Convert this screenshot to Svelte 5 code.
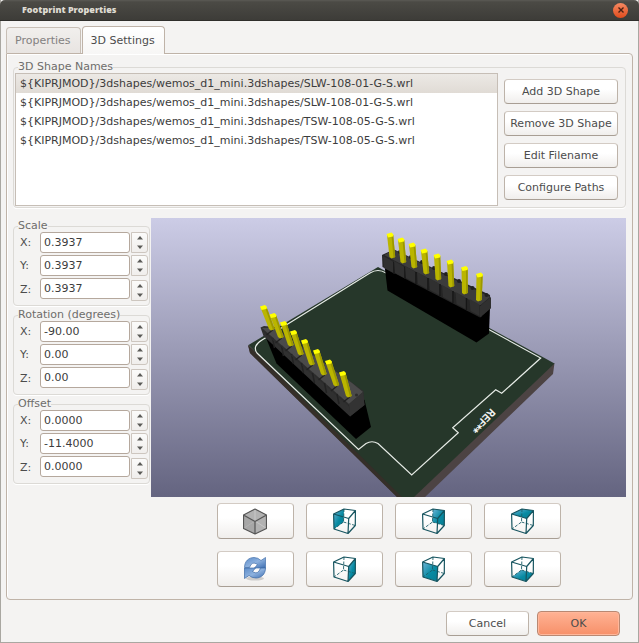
<script>
  let tab = $state('3D Settings');
  let selected = $state(0);
  let shapes = $state([
    '${KIPRJMOD}/3dshapes/wemos_d1_mini.3dshapes/SLW-108-01-G-S.wrl',
    '${KIPRJMOD}/3dshapes/wemos_d1_mini.3dshapes/SLW-108-01-G-S.wrl',
    '${KIPRJMOD}/3dshapes/wemos_d1_mini.3dshapes/TSW-108-05-G-S.wrl',
    '${KIPRJMOD}/3dshapes/wemos_d1_mini.3dshapes/TSW-108-05-G-S.wrl'
  ]);
  let groups = $state([
    { name: 'Scale', digits: 4, step: 0.1, rows: [['X', '0.3937'], ['Y', '0.3937'], ['Z', '0.3937']] },
    { name: 'Rotation (degrees)', digits: 2, step: 5, rows: [['X', '-90.00'], ['Y', '0.00'], ['Z', '0.00']] },
    { name: 'Offset', digits: 4, step: 0.1, rows: [['X', '0.0000'], ['Y', '-11.4000'], ['Z', '0.0000']] }
  ]);
  const spin = (g, row, dir) => {
    row[1] = (Number(row[1]) + dir * g.step).toFixed(g.digits);
  };

  const actions = ['Add 3D Shape', 'Remove 3D Shape', 'Edit Filename', 'Configure Paths'];
  const views = [
    { id: 'iso', label: 'Isometric view' },
    { id: 'left', label: 'Left view', face: '0.5,6 11,1 10.5,14 1,21' },
    { id: 'back', label: 'Back view', face: '11,1 22.5,2.5 22.3,17.5 10.5,14' },
    { id: 'top', label: 'Top view', face: '0.5,6 11,1 22.5,2.5 15.7,10.5' },
    { id: 'reload', label: 'Reload' },
    { id: 'right', label: 'Right view', face: '15.7,10.5 22.5,2.5 22.3,17.5 15,25.3' },
    { id: 'front', label: 'Front view', face: '0.5,6 15.7,10.5 15,25.3 1,21' },
    { id: 'bottom', label: 'Bottom view', face: '1,21 10.5,14 22.3,17.5 15,25.3' }
  ];

  // pin tip x, y and base x, y
  const farPins = [
    [390, 235, 392, 257], [401, 240, 403, 262], [412, 245, 414, 267], [424, 251, 426, 273],
    [437, 256, 438, 279], [450, 262, 451, 286], [464.5, 268.5, 464.5, 293], [479.5, 275, 478.5, 300]
  ];
  const nearPins = [
    [263.5, 307.5, 271.5, 329], [273, 315.5, 280.5, 337], [283.5, 323.5, 290.5, 345], [293.5, 332.5, 300.5, 354],
    [304.5, 341.5, 311.5, 364], [316.5, 351.5, 323.5, 374], [328.5, 362, 336, 385], [342.5, 373.5, 348.5, 396]
  ];
</script>

{#snippet pin([x, y, bx, by])}
  <polygon points="{x - 3},{y} {x + 3.2},{y} {bx + 3.2},{by} {bx - 0.5},{by + 1.5} {bx - 2.5},{by}" fill="#bab500" />
  <polygon points="{x + 1.5},{y} {x + 3.2},{y} {bx + 3.2},{by} {bx + 1.5},{by + 1}" fill="#9c9800" />
  <polygon points="{x - 3.5},{y - 1} {x + 1.5},{y - 2.5} {x + 3.5},{y - 0.5} {x + 3},{y + 1.5} {x - 2},{y + 2.5}" fill="#ff0" />
{/snippet}

<div class="window">
  <header>
    <h1>Footprint Properties</h1>
    <button class="close" aria-label="Close">
      <svg viewBox="0 0 8 8" width="8" height="8"><path d="M1.500 1.500 6.500 6.500M6.500 1.500 1.500 6.500" stroke="#4a2013" stroke-width="1.400" /></svg>
    </button>
  </header>

  <div class="tabs" role="tablist">
    {#each ['Properties', '3D Settings'] as t}
      <button role="tab" aria-selected={tab === t} class:active={tab === t} onclick={() => (tab = t)}>{t}</button>
    {/each}
  </div>

  <main>
    <fieldset class="shapes">
      <legend>3D Shape Names</legend>
      <div class="shape-row">
        <ul role="listbox" aria-label="3D Shape Names">
          {#each shapes as s, i}
            <li role="option" aria-selected={selected === i}>
              <button class:selected={selected === i} onclick={() => (selected = i)}>{s}</button>
            </li>
          {/each}
        </ul>
        <div class="actions">
          {#each actions as a}<button class="btn">{a}</button>{/each}
        </div>
      </div>
    </fieldset>

    <div class="lower">
      <div class="params">
        {#each groups as g, gi}
          <fieldset>
            <legend>{g.name}</legend>
            {#each g.rows as row, ri}
              <div class="param">
                <label for="p{gi}{ri}">{row[0]}:</label>
                <input id="p{gi}{ri}" type="text" inputmode="decimal" bind:value={row[1]} />
                <div class="spin">
                  <button aria-label="Increase {g.name} {row[0]}" onclick={() => spin(g, row, 1)}>
                    <svg viewBox="0 0 6 4" width="6" height="4"><path d="M0 3.500 3 0 6 3.500z" fill="#5a5a57" /></svg>
                  </button>
                  <button aria-label="Decrease {g.name} {row[0]}" onclick={() => spin(g, row, -1)}>
                    <svg viewBox="0 0 6 4" width="6" height="4"><path d="M0 .5 3 4 6 .5z" fill="#5a5a57" /></svg>
                  </button>
                </div>
              </div>
            {/each}
          </fieldset>
        {/each}
      </div>

      <div class="preview">
        <svg class="scene" viewBox="151 218 475 279" role="img" aria-label="3D preview">
          <!-- board edges -->
          <path d="M248 345 250 353 398 498 424 498 553 374 554.500 363 408 490z" fill="#4c4343" />
          <path d="M248 345 250 353 398 498 406 498z" fill="#352f29" />
          <!-- board surface -->
          <path d="M248.500 345 378 267 554.500 363.500 413 498 403 498z" fill="#26372a" />
          <!-- silkscreen -->
          <path d="M386 273Q378 268 370 273L262 340Q252 346 257 353L358.500 449.500 366 443.500Q372 440 378 443.500L411.700 475 458.300 432.700 452.700 427.700 495.700 389.700 501.700 393.300 540.700 358 486 328" fill="none" stroke="#e6ebe6" stroke-width="1.200" />
          <text transform="translate(491 408) rotate(135)" class="ref">REF**</text>
          <!-- far header -->
          <path d="M384.500 265 387.500 290.500 476.500 342.500 489 333.500 490 308z" fill="#000" />
          <path d="M382 255 384 254 394 249.500 490 295 491 308 480 317.500 382.500 267z" fill="#252525" />
          <path d="M384 255 394 250 490 297 480 305.500z" fill="#3c3c3c" />
          {#each farPins as p}
            <path d="M{p[2] - 9} {p[3] - 1}l9 5 3 3v10l-11 -6z" fill="#303030" />
            <path d="M{p[2] + 2} {p[3] + 5}v12" stroke="#161616" stroke-width="1.500" />
            <circle cx={p[2] + 8} cy={p[3] - 5} r="2" fill="#202020" />
          {/each}
          <path d="M480 306 491 297 491 308 480 317.500z" fill="#303030" />
          {#each farPins as p}{@render pin(p)}{/each}
          <!-- near header -->
          <path d="M266 338 276.500 363.500 356 439 371 427 364.500 400z" fill="#000" />
          <path d="M260.500 327.500 264 326 275 327 351 382 363.500 391 364.500 405 350 416.500 263.500 336z" fill="#303030" />
          <path d="M262 328 275 328 352 383 363 392 349 404z" fill="#4a4a4a" />
          {#each nearPins as p}
            <path d="M{p[2] - 9} {p[3] + 1}l10 9" stroke="#2c2c2c" stroke-width="1.500" />
            <path d="M{p[2] - 5} {p[3] + 6}l6 -5M{p[2] + 1} {p[3] + 9}l2 10" stroke="#222" stroke-width="1.500" />
            <circle cx={p[2] + 8} cy={p[3] - 1} r="1.500" fill="#2c2c2c" />
          {/each}
          <path d="M349 404 363 392 364.500 405 350 416.500z" fill="#333" />
          {#each nearPins as p}{@render pin(p)}{/each}
        </svg>

        <div class="views">
          {#each views as v}
            <button class="btn" aria-label={v.label}>
              {#if v.id === 'iso'}
                <svg viewBox="0 0 24 27" width="24" height="27" stroke-linejoin="round">
                  <path d="M12 1 23.500 7V20.500L12 26 .5 20.500V7z" fill="#b2b2b2" />
                  <path d="M12 1V13M12 13 .5 20.500M12 13 23.500 20.500" stroke="#c8c8c8" fill="none" />
                  <path d="M12 13.500V26L.5 20.500V7z" fill="#999" fill-opacity=".45" />
                  <path d="M12 1 23.500 7V20.500L12 26 .5 20.500V7zM.5 7 12 13.500 23.500 7M12 13.500V26" fill="none" stroke="#555" stroke-width="1.200" />
                </svg>
              {:else if v.id === 'reload'}
                <svg viewBox="0 0 24 26" width="24" height="26">
                  <defs>
                    <linearGradient id="blue" x1="0" y1="0" x2="1" y2="1">
                      <stop offset="0" stop-color="#5c8cc9" /><stop offset=".5" stop-color="#8db1de" /><stop offset="1" stop-color="#3b6cb0" />
                    </linearGradient>
                  </defs>
                  <ellipse cx="12" cy="22.500" rx="9" ry="2" fill="#000" opacity=".16" />
                  <path d="M1.500 11.500C1.500 5 6 1.500 11 1.500Q15 1.500 18 4.500L22.500 1.500V12H11.500L14.500 8.500Q9 4.500 6.500 11.500z" fill="url(#blue)" stroke="#4470ab" stroke-width=".7" />
                  <path d="M22.500 12C22.500 18.500 18 22 13 22Q9 22 6 19.500L1.500 22.500V12H12.500L9.500 15.500Q15 19.500 17.500 12z" fill="url(#blue)" stroke="#3b68a5" stroke-width=".7" />
                </svg>
              {:else}
                <svg viewBox="0 0 23 27" width="23" height="27" stroke-linejoin="round">
                  <defs>
                    <linearGradient id="teal-{v.id}" x1="0" y1="0" x2="1" y2="1">
                      <stop offset="0" stop-color="#6fb5d8" /><stop offset=".55" stop-color="#078aa2" /><stop offset="1" stop-color="#087c92" />
                    </linearGradient>
                  </defs>
                  <polygon points={v.face} fill="url(#teal-{v.id})" />
                  <path d="M11 1 10.500 14 1 21M10.500 14 22.300 17.500" fill="none" stroke="#1b5d68" stroke-width=".9" stroke-dasharray="3 1.500" />
                  <path d="M.6 6 11 1 22.400 2.500 15.700 10.500zM.6 6 1 21 15 25.500 22.300 17.500 22.400 2.500M15.700 10.500 15 25.500" fill="none" stroke="#16545f" stroke-width="1.200" />
                </svg>
              {/if}
            </button>
          {/each}
        </div>
      </div>
    </div>
  </main>

  <footer>
    <button class="btn">Cancel</button>
    <button class="btn ok">OK</button>
  </footer>
</div>

<style>
  :global(body) {
    background: #3c3b37;
  }
  .window {
    box-sizing: border-box;
    border: 1px solid #a9a7a1;
    border-top: 0;
    background: #f4f3f2;
    color: #4c4c4c;
    font: 11px/14px 'DejaVu Sans', sans-serif;
  }
  button,
  input {
    font: inherit;
    color: inherit;
    margin: 0;
    padding: 0;
    box-sizing: border-box;
  }
  header {
    display: flex;
    align-items: center;
    justify-content: space-between;
    height: 21px;
    margin: 0 -1px;
    padding: 0 11px 0 22px;
    box-sizing: border-box;
    border-radius: 5px 5px 0 0;
    border-bottom: 1px solid #2f2e2b;
    background: linear-gradient(#5b5a55, #4b4a45 2px, #3d3c38);
  }
  h1 {
    margin: 0;
    font: 900 9px/14px 'Open Sans', sans-serif;
    color: #dfdbd2;
  }
  .close {
    display: grid;
    place-items: center;
    width: 15px;
    height: 15px;
    border: 0;
    border-radius: 50%;
    background: linear-gradient(#f58962, #e24c1d);
  }
  .tabs {
    display: flex;
    align-items: flex-end;
    margin: 5px 5px -1px;
    position: relative;
  }
  .tabs button {
    height: 26px;
    padding: 0 9px 0 8px;
    margin-bottom: 1px;
    border: 1px solid #c8bfb6;
    border-bottom: 0;
    border-radius: 4px 4px 0 0;
    background: linear-gradient(#f1efed, #e8e4e1);
    color: #838180;
  }
  .tabs button.active {
    height: 28px;
    margin: 0 0 0 1px;
    border-color: #bfb3a8;
    background: linear-gradient(#fff, #f7f6f5);
    color: #4c4c4c;
  }
  main {
    margin: 0 5px;
    padding: 7px 6px 12px;
    border: 1px solid #bfb3a8;
    border-radius: 0 4px 4px 4px;
    box-shadow: inset 1px 1px #fff;
  }
  fieldset {
    min-width: 0;
    margin: 0;
    padding: 0 1px 4px 6px;
    border: 1px solid #dcdad6;
    border-radius: 4px;
    box-shadow: 0 1px #fff;
  }
  legend {
    height: 12px;
    margin-left: -2px;
    padding: 0;
    line-height: 12px;
    color: #6e6d6b;
  }
  .shapes {
    padding: 0 7px 1px 1px;
  }
  .shapes legend {
    margin-left: 3px;
  }
  .shape-row {
    display: flex;
    gap: 6px;
  }
  ul {
    flex: 1;
    min-width: 0;
    height: 133px;
    box-sizing: border-box;
    margin: 0;
    padding: 0;
    list-style: none;
    border: 1px solid #c6beb6;
    background: #fff;
    overflow: hidden;
  }
  li button {
    display: block;
    width: 100%;
    height: 19px;
    padding: 0 4px;
    border: 0;
    background: none;
    text-align: left;
    white-space: nowrap;
    color: #3c3c3c;
  }
  li button.selected {
    background: linear-gradient(#ece9e5, #e0dbd5);
  }
  .actions {
    display: flex;
    flex-direction: column;
    gap: 7px;
    width: 114px;
    padding-top: 6px;
  }
  .btn {
    height: 25px;
    border: 1px solid #bdb3a9;
    border-top-color: #d3cbc4;
    border-bottom-color: #a89e94;
    border-radius: 4px;
    background: linear-gradient(#fff 40%, #f0eeec);
    white-space: nowrap;
  }
  .lower {
    display: flex;
    gap: 1px;
    margin-top: 10px;
  }
  .params {
    display: flex;
    flex-direction: column;
    gap: 3px;
    width: 137px;
    padding-top: 2px;
  }
  .param {
    display: grid;
    grid-template-columns: 19px 1fr 17px;
    column-gap: 1px;
    align-items: end;
    height: 21px;
    margin-bottom: 2px;
  }
  .param:last-child {
    height: 23px;
    margin: 0;
  }
  .param label {
    align-self: center;
  }
  .param input {
    align-self: start;
    width: 100%;
    min-width: 0;
    height: 21px;
    padding: 0 3px;
    border: 1px solid #b5a89d;
    border-radius: 3px;
    background: #fff;
    color: #3c3c3c;
  }
  .spin {
    display: flex;
    flex-direction: column;
    height: 21px;
    padding: 1px 0;
    box-sizing: border-box;
    border: 1px solid #cdc6bf;
    border-radius: 0 3px 3px 0;
    background: linear-gradient(#fbfbfa, #f0eeec);
  }
  .spin button {
    flex: 1;
    display: grid;
    place-items: center;
    border: 0;
    background: none;
  }
  .preview {
    flex: 1;
    min-width: 0;
  }
  .scene {
    display: block;
    width: 100%;
    background: linear-gradient(#cccce6, #646480);
  }
  .ref {
    font: 10px 'DejaVu Sans', sans-serif;
    fill: #fff;
    stroke: #fff;
    stroke-width: 0.3px;
  }
  .views {
    display: grid;
    grid-template-columns: repeat(4, 77px);
    justify-content: center;
    gap: 12px;
    margin-top: 6px;
  }
  .views .btn {
    display: grid;
    place-items: center;
    height: 36px;
  }
  footer {
    display: flex;
    justify-content: flex-end;
    gap: 8px;
    padding: 11px 18px 6px;
  }
  footer .btn {
    width: 83px;
  }
  .btn.ok {
    border-color: #b98872;
    background: linear-gradient(#ffb294, #f79069);
    box-shadow: inset 0 0 0 1px #ffb79b;
  }
</style>
